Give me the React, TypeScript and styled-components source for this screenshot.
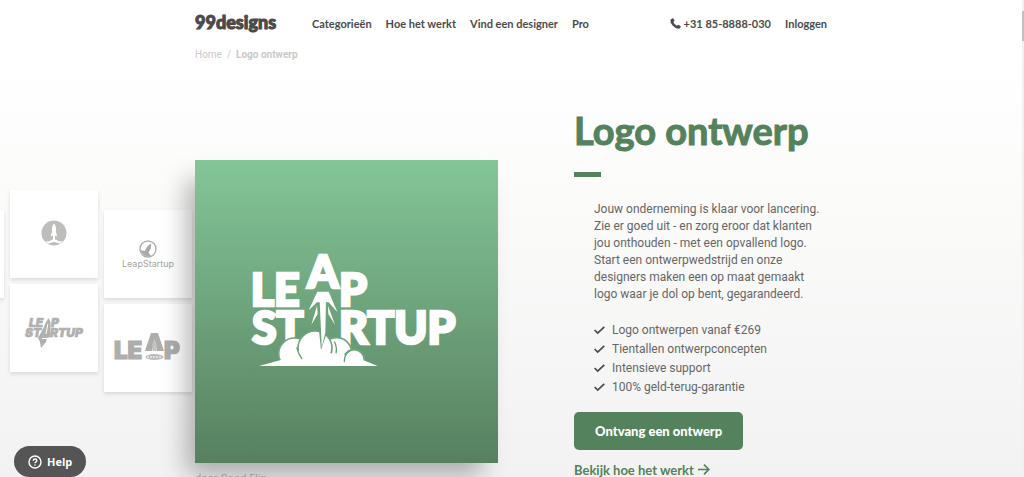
import React from "react";
import styled, { createGlobalStyle } from "styled-components";

const green = "#53825c";
const display = `Lato, "Open Sans", sans-serif`;
const body = `Roboto, "Liberation Sans", sans-serif`;

const GlobalStyle = createGlobalStyle`
  *, *::before, *::after { box-sizing: border-box; }
  body { margin: 0; font-family: ${body}; color: #555; }
  h1, p, ul, ol { margin: 0; padding: 0; }
  ul, ol { list-style: none; }
  a { color: inherit; text-decoration: none; }
`;

const Page = styled.div`
  height: 100vh;
  overflow: hidden;
  background: linear-gradient(#fff 0, #fff 60px, #fbfbfa 200px, #f3f2f2 100%);
`;

const Container = styled.div`
  max-width: 634px;
  margin: 0 auto;
`;

const Header = styled.header`
  display: flex;
  align-items: center;
  height: 48px;
  padding-right: 2px;
  font: 700 11px/16px ${display};
  color: #4a4a4a;
`;

const Brand = styled.a`
  width: 117px;
  padding-bottom: 4px;
  font: 900 18px/24px ${display};
  color: #4a4a4a;
  -webkit-text-stroke: 1px #4a4a4a;
`;

const NavGroup = styled.nav`
  display: flex;
  gap: 14px;
  & + & { margin-left: auto; }
`;

const NavLink = styled.a`
  display: flex;
  align-items: center;
  gap: 2px;
`;

const Breadcrumb = styled.ol`
  display: flex;
  gap: 5px;
  font: 10px/14px ${body};
  color: #c9c9c7;
`;

const Current = styled.li`
  font-weight: 700;
`;

const Hero = styled.main`
  display: grid;
  grid-template-columns: minmax(0, 1fr) minmax(0, 634px) minmax(0, 1fr);
  padding-top: 42px;
`;

const Thumbs = styled.div`
  display: flex;
  justify-content: flex-end;
  gap: 6px;
  padding: 86px 3px 0 0;
`;

const ThumbColumn = styled.div<{ $raised?: boolean }>`
  display: flex;
  flex: none;
  flex-direction: column;
  gap: 6px;
  padding-top: ${(p) => (p.$raised ? 0 : 20)}px;
`;

const Thumb = styled.div`
  width: 88px;
  height: 88px;
  background: #fff;
  box-shadow: 0 2px 4px rgba(0, 0, 0, 0.12);
  svg { display: block; width: 100%; height: 100%; }
`;

const Showcase = styled.section`
  display: grid;
  grid-template-columns: 303px minmax(0, 1fr);
  gap: 76px;
`;

const Figure = styled.figure`
  margin: 0;
  padding-top: 56px;
  position: relative;
`;

const Artwork = styled.div`
  aspect-ratio: 1;
  background: linear-gradient(#84c697, #578060);
  box-shadow: -12px 16px 24px -4px rgba(0, 0, 0, 0.3);
  svg { display: block; width: 100%; height: 100%; }
`;

const Caption = styled.figcaption`
  position: relative;
  padding-top: 9px;
  font: 11px/14px ${body};
  color: #999;
`;

const Title = styled.h1`
  font: 700 38px/52px ${display};
  white-space: nowrap;
  color: ${green};
  -webkit-text-stroke: 1px ${green};
`;

const Rule = styled.div`
  width: 27px;
  height: 5px;
  margin-top: 16px;
  background: ${green};
`;

const Details = styled.div`
  padding: 24px 0 15px 20px;
  font-size: 12px;
  color: #666;
`;

const Intro = styled.p`
  line-height: 17px;
`;

const Benefits = styled.ul`
  padding-top: 18px;
  line-height: 19px;
`;

const Benefit = styled.li`
  display: flex;
  align-items: center;
  gap: 7px;
`;

const CallToAction = styled.button`
  display: block;
  height: 38px;
  padding: 0 21px;
  border: 0;
  border-radius: 5px;
  background: ${green};
  color: #fff;
  font: 900 13px/18px ${display};
`;

const MoreLink = styled.a`
  display: inline-flex;
  align-items: center;
  gap: 4px;
  padding-top: 11px;
  font: 700 13px/18px ${display};
  color: ${green};
`;

const HelpButton = styled.button`
  position: fixed;
  left: 14px;
  bottom: 0;
  display: flex;
  align-items: center;
  gap: 5px;
  height: 31px;
  padding: 0 14px;
  border: 0;
  border-radius: 16px;
  background: #555;
  color: #fff;
  font: 700 11px/16px "Open Sans", sans-serif;
`;

const ScrollTrack = styled.div`
  position: fixed;
  top: 0;
  right: 0;
  bottom: 0;
  width: 2px;
  padding-top: 11px;
  background: #f1f1f1;
`;

const ScrollThumb = styled.div`
  height: 30px;
  background: #c1c1c1;
`;

const PhoneIcon = () => (
  <svg width="12" height="12" viewBox="0 0 12 12" fill="#4a4a4a" aria-hidden="true">
    <path d="M1 1.2 2.6.3q.5-.2.8.3l1 1.8q.2.5-.2.8l-.9.8q1 2.4 3.5 3.7l1-.8q.4-.3.8 0l1.9 1.2q.5.4.2.9l-.9 1.3q-.4.5-1.1.5Q5.500 10.600 2.800 7.800 0 4.900.4 2.200.5 1.500 1 1.200Z" />
  </svg>
);

const CheckIcon = () => (
  <svg width="11" height="10" viewBox="0 0 11 10" fill="none" stroke="#4a4a4a" strokeWidth="1.7" aria-hidden="true">
    <path d="M.6 4 3.700 7.100 10.300.8" />
  </svg>
);

const ArrowIcon = () => (
  <svg width="12" height="12" viewBox="0 0 12 12" fill="none" stroke={green} strokeWidth="1.7" aria-hidden="true">
    <path d="M0 5.500H10.500M6 .7 10.800 5.500 6 10.300" />
  </svg>
);

const HelpIcon = () => (
  <svg width="14" height="14" viewBox="0 0 14 14" fill="none" stroke="#fff" strokeWidth="1.4" aria-hidden="true">
    <circle cx="7" cy="7" r="6" />
    <path d="M5.200 5.700Q5.300 4 7 4T8.800 5.600Q8.800 6.500 7.700 7.100 7 7.500 7 8.300" />
    <circle cx="7" cy="10" r=".8" fill="#fff" stroke="none" />
  </svg>
);

const LeapStartupLogo = () => (
  <svg viewBox="-120 -240 909 909" role="img" aria-label="Leap Startup">
    <defs>
      <clipPath id="ground">
        <path d="M0 0H600V378H0Z" />
      </clipPath>
    </defs>
    <g fill="#fff" stroke="#fff" strokeWidth="8" fontFamily="Lato, sans-serif" fontWeight="900" fontSize="134">
      <text x="47" y="197">LE</text>
      <text x="217" y="145">A</text>
      <text x="312" y="197">P</text>
      <text x="51" y="312">ST</text>
      <text x="312" y="312">RTUP</text>
    </g>
    <g fill="#fff" stroke="#6ea67e" strokeWidth="5" clipPath="url(#ground)">
      <circle cx="305" cy="338" r="45" />
      <circle cx="178" cy="341" r="47" />
      <circle cx="240" cy="324" r="51" />
      <circle cx="357" cy="360" r="31" />
    </g>
    <path d="M72 378 140 359V345L200 330 330 345 334 362 384 360 428 378Z" fill="#fff" />
    <path d="M185 322Q190 342 201 357M298 305Q307 322 303 340M328 366Q327 342 345 333" fill="none" stroke="#689d76" strokeWidth="4" />
    <path d="M247 155H281L307 216 281 187H246L221 211Z" fill="#fff" />
    <path d="M246 197 229 254 248 222Z" fill="#fff" />
    <path d="M279 197 300 254 280 222Z" fill="#fff" />
    <path d="M251 260 258 330 275 280Z" fill="#6a9f78" />
    <path d="M254 180H273L271 278 260 322Z" fill="#fff" />
  </svg>
);

const RocketBadge = () => (
  <svg viewBox="0 0 88 88" role="img" aria-label="Rocket badge">
    <circle cx="44" cy="43" r="12.5" fill="#bdbdbb" />
    <path d="M44 33.500Q46.500 36 46 42L47.300 46.500 45 45.500V49.500Q47.500 49.500 48.500 51.500L52.500 51 50 53.500 44 52 38 53.500 35.500 51 39.500 51.500Q40.500 49.500 43 49.500V45.500L40.700 46.500 42 42Q41.500 36 44 33.500Z" fill="#fff" />
  </svg>
);

const LeapStartupLine = () => (
  <svg viewBox="0 0 88 88" role="img" aria-label="LeapStartup">
    <circle cx="44" cy="39" r="8" fill="none" stroke="#b0b0ae" strokeWidth="1.4" />
    <path d="M47 33.500Q48 38 44.500 42.500L47 46Q39 47.500 36.500 40L41 41Q42.500 36 47 33.500Z" fill="#a9a9a7" />
    <text x="44" y="57" textAnchor="middle" fontFamily="Inter, sans-serif" fontSize="9" fill="#a4a4a2">LeapStartup</text>
  </svg>
);

const LeapStartupItalic = () => (
  <svg viewBox="0 0 88 88" role="img" aria-label="Leap Startup">
    <g fill="#b0b0ae" stroke="#b0b0ae" strokeWidth=".6" fontFamily="Inter, sans-serif" fontWeight="900" fontStyle="italic" fontSize="12">
      <text x="19" y="43">LE</text>
      <text x="41" y="43">P</text>
      <text x="15" y="53">ST</text>
      <text x="40" y="53">RTUP</text>
    </g>
    <path d="M38.500 34 40.500 38V46L40 53 37 54 36 58 31 64 30 58 28 54 33 45 35.500 39Z" fill="#b0b0ae" />
    <path d="M37.800 40 36 50M32 54.500H37" stroke="#fff" fill="none" />
  </svg>
);

const LeapBold = () => (
  <svg viewBox="0 0 88 88" role="img" aria-label="Leap">
    <g fill="#adadab" stroke="#adadab" strokeWidth="1.2" fontFamily="Inter, sans-serif" fontWeight="900" fontSize="24">
      <text x="10" y="55">LE</text>
      <text x="60" y="55">P</text>
    </g>
    <path d="M47 29H54L60 47H53L50.500 35 48 47H41Z" fill="#adadab" />
    <path d="M50.500 35 52.500 40V47H48.500V40Z" fill="#c4c4c2" />
    <ellipse cx="50.5" cy="53" rx="9" ry="3" fill="#bcbcba" />
    <path d="M43 53H58" stroke="#fff" strokeDasharray="2 1" />
  </svg>
);

const benefits = [
  "Logo ontwerpen vanaf €269",
  "Tientallen ontwerpconcepten",
  "Intensieve support",
  "100% geld-terug-garantie",
];

export default function App() {
  return (
    <Page>
      <GlobalStyle />
      <Container>
        <Header>
          <Brand href="#">99designs</Brand>
          <NavGroup>
            <NavLink href="#">Categorieën</NavLink>
            <NavLink href="#">Hoe het werkt</NavLink>
            <NavLink href="#">Vind een designer</NavLink>
            <NavLink href="#">Pro</NavLink>
          </NavGroup>
          <NavGroup>
            <NavLink href="#"><PhoneIcon />+31 85-8888-030</NavLink>
            <NavLink href="#">Inloggen</NavLink>
          </NavGroup>
        </Header>
        <Breadcrumb>
          <li><a href="#">Home</a></li>
          <li>/</li>
          <Current>Logo ontwerp</Current>
        </Breadcrumb>
      </Container>
      <Hero>
        <Thumbs>
          <ThumbColumn>
            <Thumb />
          </ThumbColumn>
          <ThumbColumn $raised>
            <Thumb><RocketBadge /></Thumb>
            <Thumb><LeapStartupItalic /></Thumb>
          </ThumbColumn>
          <ThumbColumn>
            <Thumb><LeapStartupLine /></Thumb>
            <Thumb><LeapBold /></Thumb>
          </ThumbColumn>
        </Thumbs>
        <Showcase>
          <Figure>
            <Artwork><LeapStartupLogo /></Artwork>
            <Caption>door Good Flip</Caption>
          </Figure>
          <div>
            <Title>Logo ontwerp</Title>
            <Rule />
            <Details>
              <Intro>
                Jouw onderneming is klaar voor lancering.<br />
                Zie er goed uit - en zorg eroor dat klanten<br />
                jou onthouden - met een opvallend logo.<br />
                Start een ontwerpwedstrijd en onze<br />
                designers maken een op maat gemaakt<br />
                logo waar je dol op bent, gegarandeerd.
              </Intro>
              <Benefits>
                {benefits.map((text) => (
                  <Benefit key={text}><CheckIcon />{text}</Benefit>
                ))}
              </Benefits>
            </Details>
            <CallToAction type="button">Ontvang een ontwerp</CallToAction>
            <MoreLink href="#">Bekijk hoe het werkt<ArrowIcon /></MoreLink>
          </div>
        </Showcase>
      </Hero>
      <HelpButton type="button"><HelpIcon />Help</HelpButton>
      <ScrollTrack><ScrollThumb /></ScrollTrack>
    </Page>
  );
}
